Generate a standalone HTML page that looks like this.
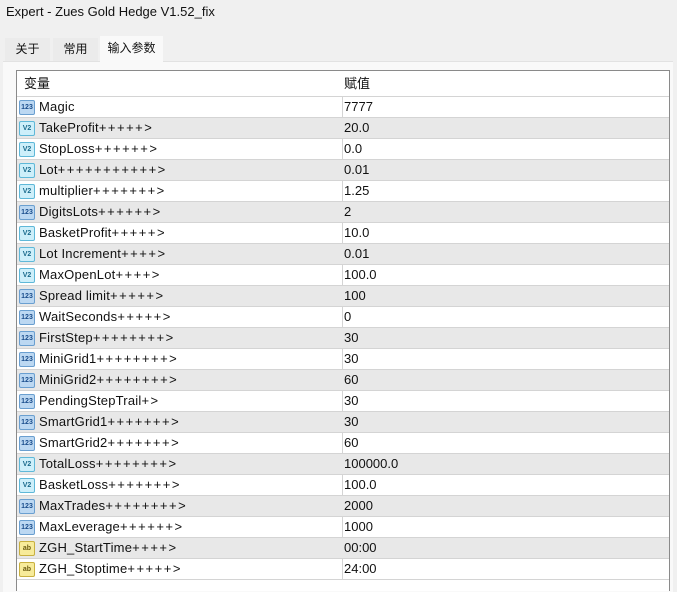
<!DOCTYPE html><html><head><meta charset="utf-8"><style>
body{margin:0;width:677px;height:586px;background:#f0f0f0;font-family:"Liberation Sans","Noto Sans CJK SC",sans-serif;font-size:13px;color:#111;position:relative;overflow:hidden}
.a{position:absolute}
.tab{position:absolute;top:38px;height:23px;line-height:23px;background:#ebebeb;text-align:center;font-size:12px}
.panel{position:absolute;left:3px;top:61px;width:670px;height:530px;background:#f9f9f9;border-top:1px solid #e2e2e2}
.tbl{position:absolute;left:16px;top:70px;width:652px;height:520px;background:#fff;border:1px solid #8a8a8a;border-bottom:none}
.row{position:absolute;left:0;width:652px;height:20px;border-bottom:1px solid #d4d4d4;line-height:20px}
.g{background:#e8e8e8}
.n{position:absolute;left:22px;letter-spacing:0.2px}
.n i{font-style:normal;letter-spacing:1.5px}
.v{position:absolute;left:327px}
.div{position:absolute;left:325px;top:0;width:1px;height:483px;background:#d4d4d4}
.ic{position:absolute;left:2px;top:3px;width:14px;height:13px;border:1px solid #6a9fd0;border-radius:2px;font-size:7px;line-height:13px;text-align:center;font-weight:bold;color:#1a4d8c;letter-spacing:0}
.i1{background:#bcd8f2}.i2{background:#cdeffa;border-color:#5fb8d8;color:#1a6a8c}.i3{background:#f7eb9a;border-color:#c8b040;color:#6a5a10}
</style></head><body>
<div class="a" style="left:6px;top:4px;font-size:13px">Expert - Zues Gold Hedge V1.52_fix</div>
<div class="tab" style="left:5px;width:45px">关于</div>
<div class="tab" style="left:53px;width:45px">常用</div>
<div class="panel"></div>
<div class="tab" style="left:100px;top:36px;width:63px;height:26px;background:#f9f9f9;line-height:24px">输入参数</div>
<div class="tbl">
<div class="row" style="top:0;height:25px;line-height:25px;border-bottom:1px solid #d4d4d4"><span class="a" style="left:7px">变量</span><span class="v">赋值</span></div>
<div style="position:absolute;left:0;top:26px;width:652px">
<div class="div"></div>
<div class="row" style="top:0"><span class="ic i1">123</span><span class="n">Magic</span><span class="v">7777</span></div>
<div class="row g" style="top:21px"><span class="ic i2">V2</span><span class="n">TakeProfit<i>+++++&gt;</i></span><span class="v">20.0</span></div>
<div class="row" style="top:42px"><span class="ic i2">V2</span><span class="n">StopLoss<i>++++++&gt;</i></span><span class="v">0.0</span></div>
<div class="row g" style="top:63px"><span class="ic i2">V2</span><span class="n">Lot<i>+++++++++++&gt;</i></span><span class="v">0.01</span></div>
<div class="row" style="top:84px"><span class="ic i2">V2</span><span class="n">multiplier<i>+++++++&gt;</i></span><span class="v">1.25</span></div>
<div class="row g" style="top:105px"><span class="ic i1">123</span><span class="n">DigitsLots<i>++++++&gt;</i></span><span class="v">2</span></div>
<div class="row" style="top:126px"><span class="ic i2">V2</span><span class="n">BasketProfit<i>+++++&gt;</i></span><span class="v">10.0</span></div>
<div class="row g" style="top:147px"><span class="ic i2">V2</span><span class="n">Lot Increment<i>++++&gt;</i></span><span class="v">0.01</span></div>
<div class="row" style="top:168px"><span class="ic i2">V2</span><span class="n">MaxOpenLot<i>++++&gt;</i></span><span class="v">100.0</span></div>
<div class="row g" style="top:189px"><span class="ic i1">123</span><span class="n">Spread limit<i>+++++&gt;</i></span><span class="v">100</span></div>
<div class="row" style="top:210px"><span class="ic i1">123</span><span class="n">WaitSeconds<i>+++++&gt;</i></span><span class="v">0</span></div>
<div class="row g" style="top:231px"><span class="ic i1">123</span><span class="n">FirstStep<i>++++++++&gt;</i></span><span class="v">30</span></div>
<div class="row" style="top:252px"><span class="ic i1">123</span><span class="n">MiniGrid1<i>++++++++&gt;</i></span><span class="v">30</span></div>
<div class="row g" style="top:273px"><span class="ic i1">123</span><span class="n">MiniGrid2<i>++++++++&gt;</i></span><span class="v">60</span></div>
<div class="row" style="top:294px"><span class="ic i1">123</span><span class="n">PendingStepTrail<i>+&gt;</i></span><span class="v">30</span></div>
<div class="row g" style="top:315px"><span class="ic i1">123</span><span class="n">SmartGrid1<i>+++++++&gt;</i></span><span class="v">30</span></div>
<div class="row" style="top:336px"><span class="ic i1">123</span><span class="n">SmartGrid2<i>+++++++&gt;</i></span><span class="v">60</span></div>
<div class="row g" style="top:357px"><span class="ic i2">V2</span><span class="n">TotalLoss<i>++++++++&gt;</i></span><span class="v">100000.0</span></div>
<div class="row" style="top:378px"><span class="ic i2">V2</span><span class="n">BasketLoss<i>+++++++&gt;</i></span><span class="v">100.0</span></div>
<div class="row g" style="top:399px"><span class="ic i1">123</span><span class="n">MaxTrades<i>++++++++&gt;</i></span><span class="v">2000</span></div>
<div class="row" style="top:420px"><span class="ic i1">123</span><span class="n">MaxLeverage<i>++++++&gt;</i></span><span class="v">1000</span></div>
<div class="row g" style="top:441px"><span class="ic i3">ab</span><span class="n">ZGH_StartTime<i>++++&gt;</i></span><span class="v">00:00</span></div>
<div class="row" style="top:462px"><span class="ic i3">ab</span><span class="n">ZGH_Stoptime<i>+++++&gt;</i></span><span class="v">24:00</span></div>
</div></div>
</body></html>
